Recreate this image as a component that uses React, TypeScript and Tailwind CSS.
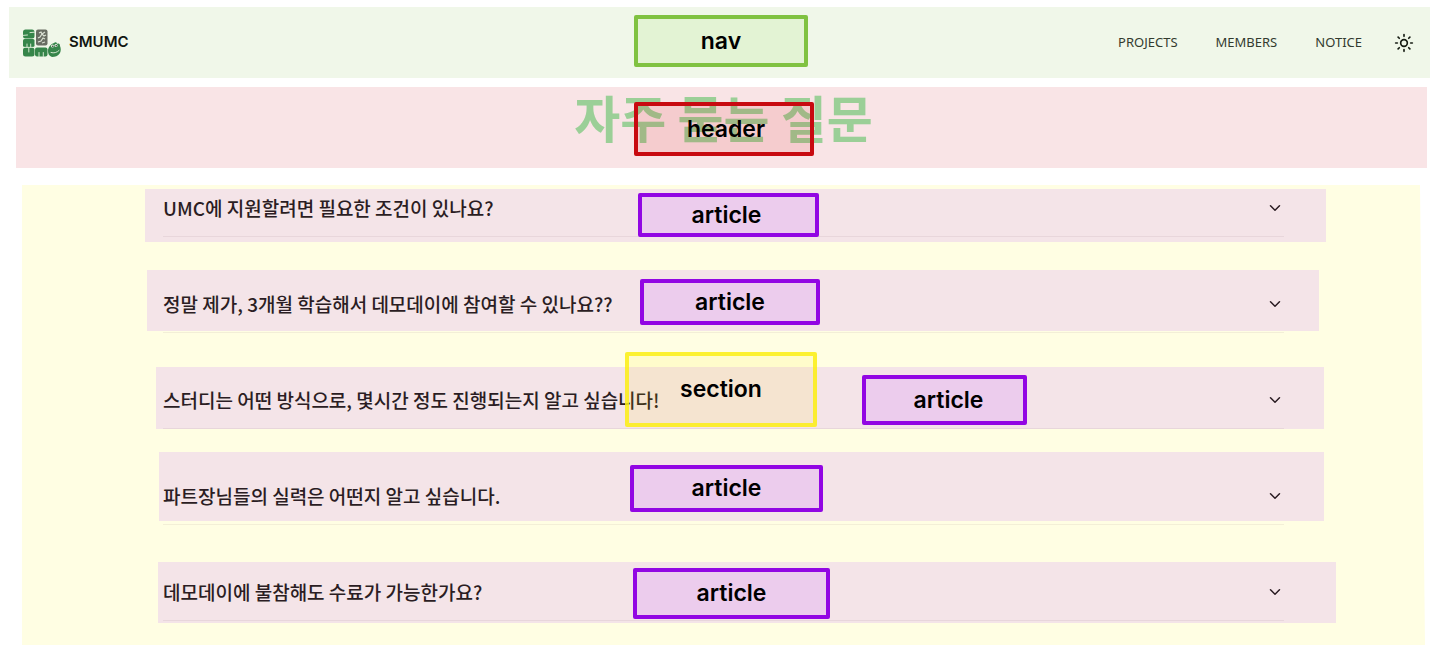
import { ChevronDown, Sun } from "lucide-react";

const LABEL =
  "absolute flex items-center justify-center rounded-xs border-4 pb-px font-['Inter',sans-serif] text-[23px] font-semibold leading-7 text-black";
const ARTICLE_LABEL = "border-[#9206e3] bg-[#e4b4f2]/50";

const questions = [
  {
    text: "UMC에 지원할려면 필요한 조건이 있나요?",
    band: "-left-[18px] -right-[42px] -top-[5px] h-[53px]",
    label: "left-[475px] -top-px w-[181px] h-[44px] pr-1",
  },
  {
    text: "정말 제가, 3개월 학습해서 데모데이에 참여할 수 있나요??",
    band: "-left-[16px] -right-[35px] -top-[20px] h-[61px]",
    label: "left-[477px] -top-[11px] w-[180px] h-[46px]",
  },
  {
    text: "스터디는 어떤 방식으로, 몇시간 정도 진행되는지 알고 싶습니다!",
    band: "-left-[7px] -right-[40px] -top-[19px] h-[62px]",
    label: "left-[699px] -top-[11px] w-[165px] h-[50px] pl-2",
    section: true,
  },
  {
    text: "파트장님들의 실력은 어떤지 알고 싶습니다.",
    band: "-left-[4px] -right-[40px] -top-[30px] h-[69px]",
    label: "left-[467px] -top-[17px] w-[193px] h-[47px]",
  },
  {
    text: "데모데이에 불참해도 수료가 가능한가요?",
    band: "-left-[5px] -right-[52px] -top-[16px] h-[61px]",
    label: "left-[470px] -top-[10px] w-[197px] h-[51px]",
  },
];

function Logo() {
  return (
    <svg width="39" height="28" viewBox="0 0 39 28" fill="none" aria-hidden="true">
      <g fill="#36854a">
        <rect x="1" y="0.5" width="11.5" height="9" rx="2.5" />
        <rect x="1" y="10" width="11.5" height="8" rx="1.5" />
        <rect x="1" y="18.5" width="11.5" height="9" rx="2.5" />
        <rect x="13" y="18.5" width="12.5" height="9" rx="2" />
        <path d="M26 22c0-4 3-7 6-8 1-1 3-1 3 1 2-1 3 0 3 2 1 2 1 5 0 7-2 3-5 4-8 4-3-1-4-3-4-6z" />
      </g>
      <g stroke="#e4f0dd" strokeWidth="0.9" strokeLinecap="round">
        <path d="M12.5 3.2L8 3.6M1 6.4L5.500 6" />
        <path d="M5 15v3M8.700 15v3" />
        <path d="M6.800 19v4M17 23.500v4M21.300 23.500v4" />
        <path d="M1.500 18.300h11" strokeWidth="0.7" />
        <path d="M29 23.500c3 1 6 0 8-2" />
      </g>
      <rect x="14" y="0.5" width="11.5" height="16" rx="2" fill="#686d62" />
      <path
        d="M17 4l2-1 1 2 3-2M16 9l2-1 2-3 2 2 2-1M16 13l3-1 2-3 2 1M20 14l3-1"
        stroke="#d9e0d2"
        strokeWidth="1.2"
      />
      <circle cx="30.5" cy="17" r="1.5" fill="#eef6e8" />
      <circle cx="34" cy="16.5" r="1.5" fill="#eef6e8" />
      <circle cx="30.8" cy="17.2" r="0.8" fill="#26352a" />
      <circle cx="34.2" cy="16.7" r="0.8" fill="#26352a" />
    </svg>
  );
}

export default function App() {
  return (
    <div className="min-h-screen bg-white pt-[7px] font-['Noto_Sans','Noto_Sans_CJK_KR',sans-serif]">
      <nav className="relative ml-[9px] mr-[10px] flex h-[71px] items-center justify-between bg-[#f0f7e9] pl-[13px] pr-4">
        <a href="#home" className="flex items-center gap-2">
          <Logo />
          <span className="font-['Inter',sans-serif] text-[15px] font-semibold text-[#111510]">SMUMC</span>
        </a>
        <div className="flex items-center text-[13px] text-[#333b2f]">
          <div className="flex gap-[38px]">
            <a href="#projects">PROJECTS</a>
            <a href="#members">MEMBERS</a>
            <a href="#notice">NOTICE</a>
          </div>
          <button type="button" aria-label="Toggle theme" className="ml-8 text-[#151b12]">
            <Sun size={20} strokeWidth={2} />
          </button>
        </div>
        <span className={`${LABEL} left-[625px] top-2 h-[52px] w-[174px] border-[#80c241] bg-[#dbf0c7]/60`}>nav</span>
      </nav>

      <header className="relative ml-4 mr-[13px] mt-[9px] h-[81px] bg-[#f9e4e6] pl-1">
        <h1 className="text-center font-['Noto_Sans_CJK_KR',sans-serif] text-[50px] font-bold leading-[58px] text-[#9bcf97]">
          자주 묻는 질문
        </h1>
        <span className={`${LABEL} left-[618px] top-[15px] h-[54px] w-[180px] border-[#c80a10] bg-[#dc0000]/10 pl-1`}>
          header
        </span>
      </header>

      <section className="isolate ml-[22px] mr-[15px] mt-[17px] bg-[#fffee3] pb-6 pl-[141px] pr-[141px] pt-[9px] [clip-path:polygon(0_0,calc(100%-5px)_0,100%_100%,0_100%)]">
        <div className="flex flex-col gap-[53px]">
          {questions.map((q) => (
            <article key={q.text} className="relative border-b border-[#50283c]/7 pb-[14px]">
              <div className={`absolute -z-10 bg-[#f4e4e8] ${q.band}`} />
              <button
                type="button"
                aria-expanded="false"
                className="flex w-full items-center justify-between text-left text-[#2b1d23]"
              >
                <span className="font-['Noto_Sans_CJK_KR',sans-serif] text-[19px] font-medium leading-7">
                  {q.text}
                </span>
                <ChevronDown size={18} strokeWidth={2} />
              </button>
              <span className={`${LABEL} ${ARTICLE_LABEL} ${q.label}`}>article</span>
              {q.section && (
                <span
                  className={`${LABEL} -top-[34px] left-[462px] h-[75px] w-[192px] border-[#fbef10]/85 bg-[#fff000]/10 bg-clip-padding`}
                >
                  section
                </span>
              )}
            </article>
          ))}
        </div>
      </section>
    </div>
  );
}
